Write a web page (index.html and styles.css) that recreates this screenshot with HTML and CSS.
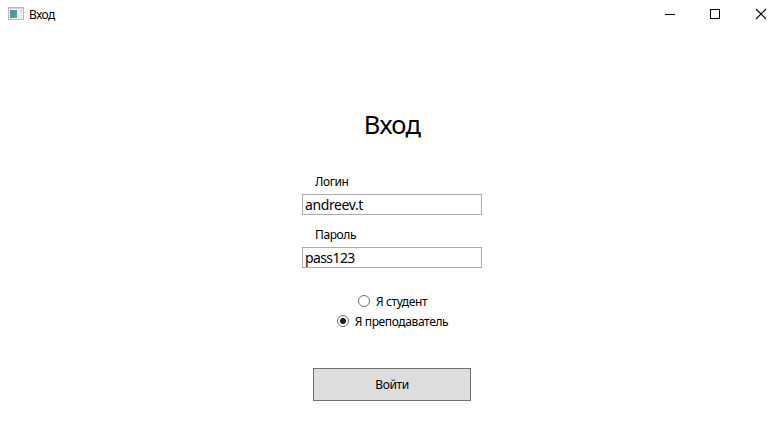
FILE: index.html
```html
<!DOCTYPE html>
<html lang="ru">
<head>
<meta charset="utf-8">
<title>Вход</title>
<link rel="stylesheet" href="styles.css">
</head>
<body>
<header class="titlebar">
  <svg class="app-icon" width="16" height="14" viewBox="0 0 16 14">
    <defs><linearGradient id="pane" x1="0" y1="0" x2="1" y2="1"><stop offset="0" stop-color="#4f86b0"/><stop offset="1" stop-color="#57ae7e"/></linearGradient></defs>
    <rect x=".5" y=".5" width="15" height="12" fill="#f4f4f5" stroke="#b9bbbf"/>
    <path d="M1 1.5h14" stroke="#d3d5d8"/>
    <rect x="2" y="3" width="7" height="8" fill="url(#pane)"/>
    <path d="M10.5 3v8" stroke="#e1e3e6"/>
    <path d="M12 3.5h2M12 5.5h2" stroke="#c9ccd0"/>
    <path d="M12 8.5h2M12 10.5h2" stroke="#dfe1e4"/>
  </svg>
  <span class="title">Вход</span>
  <div class="controls">
    <svg width="45" height="28"><path d="M15 14.5h10" stroke="#000"/></svg>
    <svg width="45" height="28"><rect x="15.5" y="9.5" width="9" height="9" fill="none" stroke="#000"/></svg>
    <svg width="45" height="28"><path d="M16 9l10 10M26 9L16 19" stroke="#000" stroke-width="1.1"/></svg>
  </div>
</header>
<main class="login">
  <h1 class="heading">Вход</h1>
  <label class="label" for="user">Логин</label>
  <input class="field user" id="user" type="text" value="andreev.t">
  <label class="label second" for="pass">Пароль</label>
  <input class="field pass" id="pass" type="text" value="pass123">
  <div class="roles">
    <label class="role"><input type="radio" name="role"><span>Я студент</span></label>
    <label class="role"><input type="radio" name="role" checked><span>Я преподаватель</span></label>
  </div>
  <button class="submit" type="button">Войти</button>
</main>
</body>
</html>
```
FILE: styles.css
```css
* { box-sizing: border-box; }
body {
  margin: 0;
  height: 443px;
  overflow: hidden;
  background: #fff;
  color: #000;
  font: 12px/16px "Noto Sans", "Open Sans", sans-serif;
}
.titlebar { display: flex; height: 28px; }
.app-icon { margin: 7px 5px 0 8px; }
.title { padding-top: 7px; letter-spacing: -.5px; }
.controls { display: flex; margin-left: auto; margin-right: -3px; }
.login {
  display: flex;
  flex-direction: column;
  align-items: center;
  padding: 78px 0 0 2px;
}
.heading { margin: 0; font-size: 25.5px; line-height: 36px; font-weight: 400; letter-spacing: -.7px; }
.label { width: 180px; padding-left: 13px; margin-top: 32px; height: 20px; letter-spacing: -.4px; }
.label.second { margin-top: 12px; }
.field {
  width: 180px;
  height: 21px;
  padding: 0 2px;
  border: 1px solid #abadb3;
  border-radius: 0;
  background: #fff;
  color: #000;
  font: 14px/19px "Noto Sans", "Open Sans", sans-serif;
  letter-spacing: -.4px;
  outline: 0;
}
.pass { letter-spacing: -.6px; }
.roles {
  display: flex;
  flex-direction: column;
  align-items: center;
  gap: 4px;
  margin-top: 25px;
}
.role { display: flex; align-items: center; gap: 6px; height: 16px; padding-left: 1px; letter-spacing: -.38px; }
.role span { padding-top: 1px; }
.role input {
  appearance: none;
  width: 12px;
  height: 12px;
  margin: 0;
  border: 1px solid #707070;
  border-radius: 50%;
  background: #fff;
}
.role input:checked { background: radial-gradient(circle, #212121 0 2.7px, #fff 3.4px); }
.submit {
  width: 158px;
  height: 33px;
  margin-top: 39px;
  padding: 0;
  border: 1px solid #707070;
  border-radius: 0;
  background: #ddd;
  color: #000;
  font: inherit;
  letter-spacing: -.4px;
}
```
